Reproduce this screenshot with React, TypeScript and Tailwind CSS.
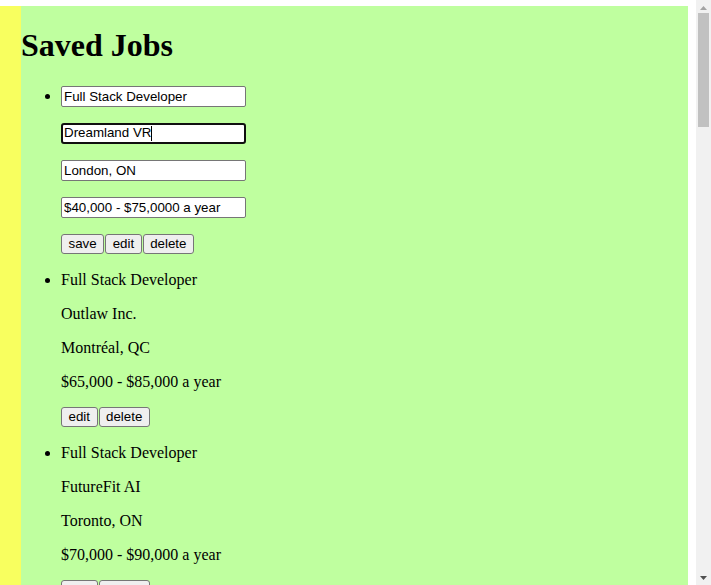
import React from 'react'

type Job = {
  title: string
  company: string
  location: string
  salary: string
}

const jobs: Job[] = [
  { title: 'Full Stack Developer', company: 'Outlaw Inc.', location: 'Montréal, QC', salary: '$65,000 - $85,000 a year' },
  { title: 'Full Stack Developer', company: 'FutureFit AI', location: 'Toronto, ON', salary: '$70,000 - $90,000 a year' },
  { title: 'Frontend Developer', company: 'Northwind Labs', location: 'Ottawa, ON', salary: '$60,000 - $80,000 a year' },
]

const inputCls =
  "block w-[185px] h-[21px] border border-[#767676] rounded-[2px] bg-white px-[2px] text-[13.33px] font-['Liberation_Sans',Arial,sans-serif] text-black"

const btnCls =
  "border border-[#767676] rounded-[3px] bg-[#efefef] px-[6.5px] h-[20px] text-[13.33px] leading-none font-['Liberation_Sans',Arial,sans-serif] text-black"

function Buttons({ editing }: { editing?: boolean }) {
  return (
    <div className="mt-4 mb-[14px] flex gap-px">
      {editing && <button className={btnCls}>save</button>}
      <button className={btnCls}>edit</button>
      <button className={btnCls}>delete</button>
    </div>
  )
}

function Scrollbar() {
  return (
    <div className="w-[15px] shrink-0 bg-[#f1f1f1] flex flex-col items-center">
      <div className="h-[15px] w-full flex items-center justify-center">
        <svg width="7" height="4" viewBox="0 0 7 4">
          <polygon points="3.5,0 7,4 0,4" fill="#a3a3a3" />
        </svg>
      </div>
      <div className="w-[11px] h-[114px] bg-[#c1c1c1] -mt-[2px]" />
      <div className="flex-1" />
      <div className="h-[15px] w-full flex items-center justify-center">
        <svg width="7" height="4" viewBox="0 0 7 4">
          <polygon points="0,0 7,0 3.5,4" fill="#505050" />
        </svg>
      </div>
    </div>
  )
}

export default function App() {
  return (
    <div className="flex h-[585px] overflow-hidden bg-white">
      <div className="flex-1 overflow-hidden pt-[6px] pr-[8px]">
        <div className="bg-[#f8ff5f] pl-[21px]">
          <div className="flow-root bg-[#bfff9f] font-['Liberation_Serif','Times_New_Roman',serif] text-black text-base">
            <h1 className="mt-[21.44px] mb-[19.44px] text-[32px] font-bold leading-[37px]">Saved Jobs</h1>
            <ul className="my-4 pl-10 list-disc">
              {/* job being edited */}
              <li>
                <div className="my-4">
                  <input className={inputCls} defaultValue="Full Stack Developer" />
                </div>
                <div className="my-4">
                  <div className="flex items-center w-[185px] h-[21px] border-2 border-[#101010] rounded-[3px] bg-white px-[1px] text-[13.33px] font-['Liberation_Sans',Arial,sans-serif]">
                    <span>Dreamland VR</span>
                    <span className="w-px h-[15px] bg-black" />
                  </div>
                </div>
                <div className="my-4">
                  <input className={inputCls} defaultValue="London, ON" />
                </div>
                <div className="my-4">
                  <input className={inputCls} defaultValue="$40,000 - $75,0000 a year" />
                </div>
                <Buttons editing />
              </li>
              {jobs.map((job, i) => (
                <li key={i}>
                  <p className="mt-[14px] mb-4 leading-[18px]">{job.title}</p>
                  <p className="my-4 leading-[18px]">{job.company}</p>
                  <p className="my-4 leading-[18px]">{job.location}</p>
                  <p className="my-4 leading-[18px]">{job.salary}</p>
                  <Buttons />
                </li>
              ))}
            </ul>
          </div>
        </div>
      </div>
      <Scrollbar />
    </div>
  )
}
